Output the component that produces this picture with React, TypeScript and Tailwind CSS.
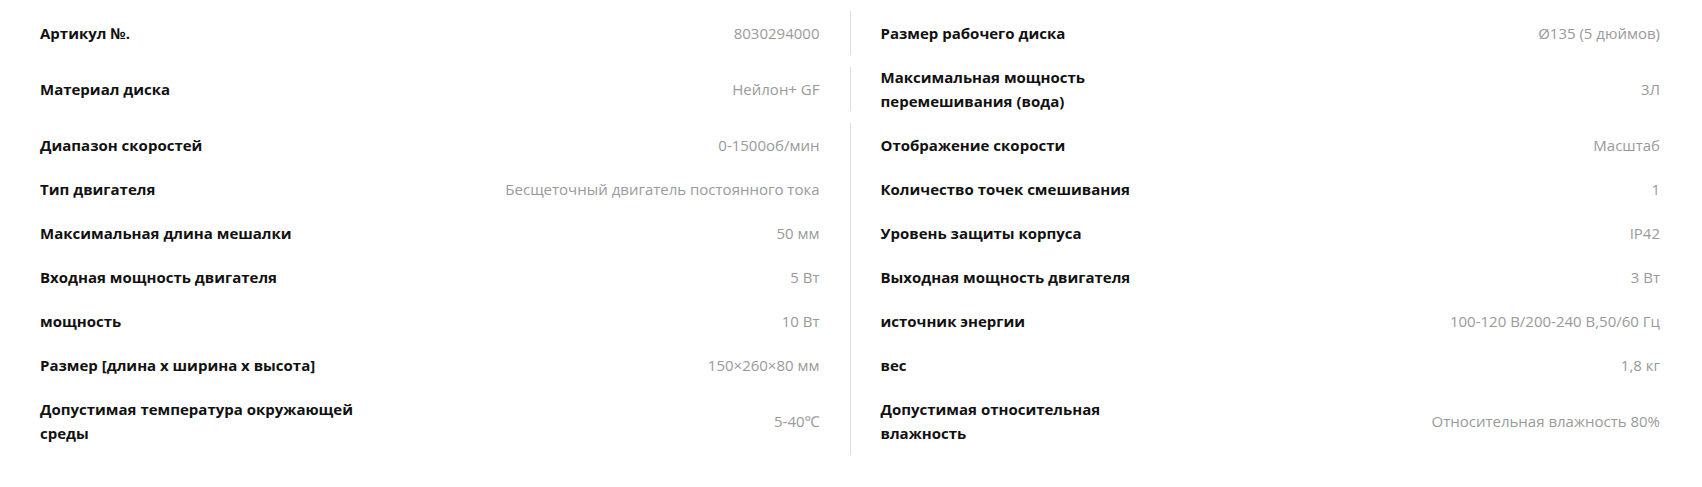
import React from 'react'

type Spec = { label: string[]; value: string }

const rows: { left: Spec; right: Spec; h: string }[] = [
  {
    left: { label: ['Артикул №.'], value: '8030294000' },
    right: { label: ['Размер рабочего диска'], value: 'Ø135 (5 дюймов)' },
    h: 'h-[44px] mb-[12px]',
  },
  {
    left: { label: ['Материал диска'], value: 'Нейлон+ GF' },
    right: { label: ['Максимальная мощность', 'перемешивания (вода)'], value: '3Л' },
    h: 'h-[44px] mb-[12px]',
  },
  {
    left: { label: ['Диапазон скоростей'], value: '0-1500об/мин' },
    right: { label: ['Отображение скорости'], value: 'Масштаб' },
    h: 'h-[44px]',
  },
  {
    left: { label: ['Тип двигателя'], value: 'Бесщеточный двигатель постоянного тока' },
    right: { label: ['Количество точек смешивания'], value: '1' },
    h: 'h-[44px]',
  },
  {
    left: { label: ['Максимальная длина мешалки'], value: '50 мм' },
    right: { label: ['Уровень защиты корпуса'], value: 'IP42' },
    h: 'h-[44px]',
  },
  {
    left: { label: ['Входная мощность двигателя'], value: '5 Вт' },
    right: { label: ['Выходная мощность двигателя'], value: '3 Вт' },
    h: 'h-[44px]',
  },
  {
    left: { label: ['мощность'], value: '10 Вт' },
    right: { label: ['источник энергии'], value: '100-120 В/200-240 В,50/60 Гц' },
    h: 'h-[44px]',
  },
  {
    left: { label: ['Размер [длина x ширина x высота]'], value: '150×260×80 мм' },
    right: { label: ['вес'], value: '1,8 кг' },
    h: 'h-[44px]',
  },
  {
    left: { label: ['Допустимая температура окружающей', 'среды'], value: '5-40℃' },
    right: { label: ['Допустимая относительная', 'влажность'], value: 'Относительная влажность 80%' },
    h: 'h-[68px]',
  },
]

const Cell = ({ spec }: { spec: Spec }) => (
  <>
    <div className="text-[15px] font-bold leading-[24px] text-[#111]">
      {spec.label.map((line, i) => (
        <div key={i}>{line}</div>
      ))}
    </div>
    <div className="text-[15px] font-normal leading-[24px] text-[#9a9a9a] text-right">{spec.value}</div>
  </>
)

export default function App() {
  return (
    <div
      className="w-full bg-white pt-[11px] pl-[40px] pr-[42px]"
      style={{ fontFamily: '"Open Sans", "Noto Sans", sans-serif' }}
    >
      {rows.map((row, i) => (
        <div key={i} className={`flex ${row.h}`}>
          <div className="flex flex-1 items-center justify-between border-r border-[#dcdcdc] pr-[30px]">
            <Cell spec={row.left} />
          </div>
          <div className="flex flex-1 items-center justify-between pl-[30px]">
            <Cell spec={row.right} />
          </div>
        </div>
      ))}
    </div>
  )
}
